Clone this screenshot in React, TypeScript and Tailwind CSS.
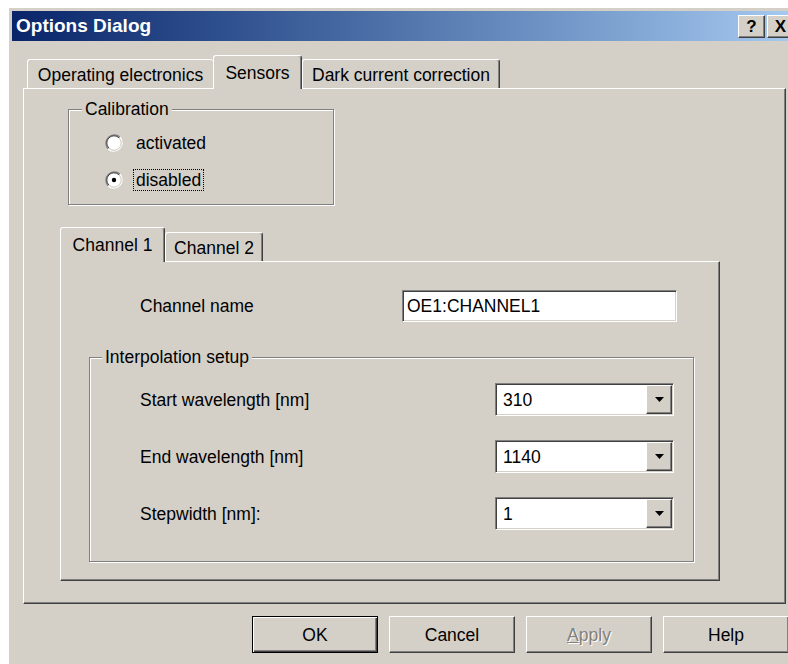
import clsx from "clsx";

// classic 3D edges
const raised =
  "border border-t-white border-l-white border-r-[#404040] border-b-[#404040] bg-[#d4d0c8] shadow-[inset_-1px_-1px_0_#808080]";
const sunken =
  "border border-t-[#808080] border-l-[#808080] border-r-white border-b-white bg-white shadow-[inset_1px_1px_0_#404040,inset_-1px_-1px_0_#d4d0c8]";
const page =
  "border border-t-white border-l-white border-r-[#404040] border-b-[#404040] shadow-[inset_-1px_-1px_0_#808080]";
const etched = "border border-[#808080] shadow-[inset_1px_1px_0_#fff,1px_1px_0_#fff]";

function Tab({
  label,
  selected,
  edge,
  className,
}: {
  label: string;
  selected?: boolean;
  edge?: boolean;
  className: string;
}) {
  return (
    <div
      className={clsx(
        "flex items-center justify-center rounded-t-[3px] border-l border-t border-l-white border-t-white bg-[#d4d0c8] whitespace-nowrap",
        selected && "relative z-10 -mb-px",
        (selected || edge) && "border-r border-r-[#404040] shadow-[inset_-1px_0_0_#808080]",
        className
      )}
    >
      {label}
    </div>
  );
}

function Radio({ checked }: { checked?: boolean }) {
  return (
    <svg width="18" height="18" viewBox="0 0 18 18" className="shrink-0">
      <circle cx="9" cy="9" r="7" fill="#fff" />
      <path d="M3 15A8.5 8.5 0 0 1 15 3" fill="none" stroke="#808080" strokeWidth="1.2" />
      <path d="M15 3A8.5 8.5 0 0 1 3 15" fill="none" stroke="#fff" strokeWidth="1.2" />
      <path d="M3.9 14.1A7.2 7.2 0 0 1 14.1 3.9" fill="none" stroke="#404040" />
      <path d="M14.1 3.9A7.2 7.2 0 0 1 3.9 14.1" fill="none" stroke="#d4d0c8" />
      {checked && <circle cx="9" cy="9" r="2.2" fill="#000" />}
    </svg>
  );
}

function Combo({ value }: { value: string }) {
  return (
    <div className={clsx("flex h-[33px] w-[179px] items-stretch p-px", sunken)}>
      <div className="flex flex-1 items-center pl-[6px]">{value}</div>
      <div className={clsx("flex w-[26px] items-center justify-center", raised)}>
        <svg width="9" height="5" viewBox="0 0 9 5">
          <polygon points="0,0 9,0 4.5,5" fill="#000" />
        </svg>
      </div>
    </div>
  );
}

function Button({ children, isDefault }: { children: React.ReactNode; isDefault?: boolean }) {
  return (
    <div
      className={clsx(
        "flex h-[37px] w-[126px] shrink-0 items-center justify-center bg-[#d4d0c8]",
        isDefault
          ? "border border-black shadow-[inset_1px_1px_0_#fff,inset_-1px_-1px_0_#404040,inset_-2px_-2px_0_#808080]"
          : raised
      )}
    >
      {children}
    </div>
  );
}

export default function App() {
  return (
    <div className="h-[664px] w-[788px] overflow-hidden bg-white pl-[8px] pt-[7px] font-['Liberation_Sans',Arial,sans-serif] text-[17.5px] leading-[20px] text-black">
      <div className="h-[700px] w-[791px] border-l border-t border-white bg-[#d4d0c8] p-[3px]">
        {/* caption */}
        <div className="flex h-[30px] items-center justify-between bg-linear-to-r from-[#0a246a] to-[#a6caf0] pl-[4px] pr-[2px]">
          <span className="text-[19px] font-bold text-white">Options Dialog</span>
          <div className="flex gap-[2px]">
            <div className={clsx("flex h-[23px] w-[27px] items-center justify-center text-[17px] font-bold leading-none", raised)}>?</div>
            <div className={clsx("flex h-[23px] w-[27px] items-center justify-center text-[17px] font-bold leading-none", raised)}>X</div>
          </div>
        </div>

        <div className="ml-[11px] mt-[14px]">
          <div className="flex h-[33px] items-end pl-[4px]">
            <Tab label="Operating electronics" className="h-[29px] w-[186px] pt-[2px]" />
            <Tab label="Sensors" selected className="h-[34px] w-[89px]" />
            <Tab label="Dark current correction" edge className="h-[29px] w-[198px] pt-[2px]" />
          </div>

          <div className={clsx("flex h-[516px] w-[763px] flex-col pl-[44px]", page)}>
            <fieldset className={clsx("mt-[10px] h-[106px] w-[266px]", etched)}>
              <legend className="ml-[13px] bg-[#d4d0c8] px-[3px] leading-[20px]">Calibration</legend>
              <div className="mt-[13px] flex flex-col gap-[15px] pl-[36px]">
                <label className="flex h-[22px] items-center">
                  <Radio />
                  <span className="ml-[10px] border border-transparent px-[2px] leading-[20px]">activated</span>
                </label>
                <label className="flex h-[22px] items-center">
                  <Radio checked />
                  <span className="ml-[10px] border border-dotted border-black px-[2px] leading-[20px]">disabled</span>
                </label>
              </div>
            </fieldset>

            <div className="-ml-[8px] mt-[22px]">
              <div className="flex h-[34px] items-end">
                <Tab label="Channel 1" selected className="h-[35px] w-[105px]" />
                <Tab label="Channel 2" edge className="h-[29px] w-[98px] pt-[2px]" />
              </div>
              <div className={clsx("flex h-[320px] w-[660px] flex-col", page)}>
                <div className="mt-[28px] flex items-center pl-[79px]">
                  <span className="w-[262px]">Channel name</span>
                  <div className={clsx("flex h-[32px] w-[275px] items-center pl-[4px]", sunken)}>OE1:CHANNEL1</div>
                </div>

                <fieldset className={clsx("ml-[28px] mt-[25px] h-[215px] w-[605px]", etched)}>
                  <legend className="ml-[12px] bg-[#d4d0c8] px-[3px] leading-[20px]">Interpolation setup</legend>
                  <div className="mt-[16px] flex flex-col gap-[24px] pl-[50px]">
                    <div className="flex items-center">
                      <span className="w-[355px]">Start wavelength [nm]</span>
                      <Combo value="310" />
                    </div>
                    <div className="flex items-center">
                      <span className="w-[355px]">End wavelength [nm]</span>
                      <Combo value="1140" />
                    </div>
                    <div className="flex items-center">
                      <span className="w-[355px]">Stepwidth [nm]:</span>
                      <Combo value="1" />
                    </div>
                  </div>
                </fieldset>
              </div>
            </div>
          </div>
        </div>

        <div className="ml-[240px] mt-[12px] flex gap-[11px]">
          <Button isDefault>OK</Button>
          <Button>Cancel</Button>
          <Button>
            <span className="text-[#808080] [text-shadow:1px_1px_0_#fff]">
              <span className="underline">A</span>pply
            </span>
          </Button>
          <Button>Help</Button>
        </div>
      </div>
    </div>
  );
}
